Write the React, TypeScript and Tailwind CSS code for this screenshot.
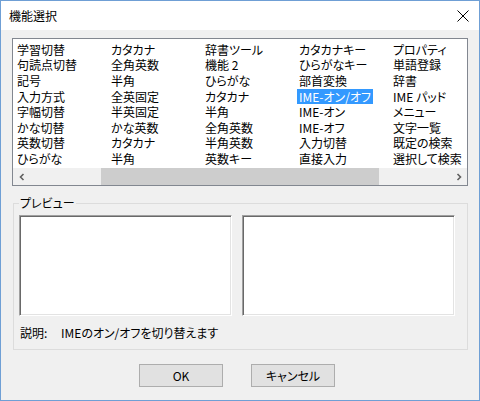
import React from "react";

const cols: string[][] = [
  ["学習切替", "句読点切替", "記号", "入力方式", "字幅切替", "かな切替", "英数切替", "ひらがな"],
  ["カタカナ", "全角英数", "半角", "全英固定", "半英固定", "かな英数", "カタカナ", "半角"],
  ["辞書ツール", "機能 2", "ひらがな", "カタカナ", "半角", "全角英数", "半角英数", "英数キー"],
  ["カタカナキー", "ひらがなキー", "部首変換", "IME-オン/オフ", "IME-オン", "IME-オフ", "入力切替", "直接入力"],
  ["プロパティ", "単語登録", "辞書", "IME パッド", "メニュー", "文字一覧", "既定の検索", "選択して検索"],
];

export default function App() {
  return (
    <div className="w-[480px] h-[401px] border border-[#6f9fd5] bg-[#f0f0f0] flex flex-col text-[12px] text-black overflow-hidden font-['Noto_Sans_CJK_JP','Noto_Sans',sans-serif] [font-feature-settings:'palt']">
      {/* Title bar */}
      <div className="h-[29px] bg-white flex items-center justify-between pl-[8px] pr-[7px] shrink-0">
        <span className="text-[12px] leading-none">機能選択</span>
        <svg width="12" height="12" viewBox="0 0 12 12" className="mr-[3px]">
          <path d="M0.5 0.5 L11.5 11.5 M11.5 0.5 L0.5 11.5" stroke="#000" strokeWidth="1" />
        </svg>
      </div>

      {/* Body */}
      <div className="flex flex-col pl-[11px] pt-[8px]">
        {/* List box */}
        <div className="w-[456px] h-[148px] border border-[#828790] bg-white flex flex-col">
          <div className="flex-1 flex pl-[2px] pt-[3px] overflow-hidden">
            {cols.map((col, ci) => (
              <div key={ci} className="w-[94px] shrink-0 flex flex-col">
                {col.map((t, ri) => {
                  const sel = ci === 3 && ri === 3;
                  return (
                    <div key={ri} className="h-[15.6px] flex items-center">
                      <span
                        className={
                          sel
                            ? "px-[2px] h-[15px] flex items-center bg-[#3399ff] text-white leading-none"
                            : "px-[2px] leading-none"
                        }
                      >
                        {t}
                      </span>
                    </div>
                  );
                })}
              </div>
            ))}
          </div>
          {/* Horizontal scrollbar */}
          <div className="h-[17px] bg-[#f0f0f0] flex items-center shrink-0">
            <div className="w-[17px] h-[17px] flex items-center justify-center">
              <svg width="8" height="8" viewBox="0 0 8 8">
                <path d="M5.5 1 L2.5 4 L5.5 7" stroke="#606060" strokeWidth="1.6" fill="none" />
              </svg>
            </div>
            <div className="flex-1 h-[17px] flex items-center">
              <div className="ml-[71px] w-[278px] h-[17px] bg-[#cdcdcd]" />
            </div>
            <div className="w-[17px] h-[17px] flex items-center justify-center">
              <svg width="8" height="8" viewBox="0 0 8 8">
                <path d="M2.5 1 L5.5 4 L2.5 7" stroke="#606060" strokeWidth="1.6" fill="none" />
              </svg>
            </div>
          </div>
        </div>

        {/* Preview group */}
        <div className="relative mt-[17px] ml-[1px] w-[455px] h-[147px] border border-[#dcdcdc] flex flex-col">
          <span className="absolute left-[5px] top-[-8px] px-[1px] bg-[#f0f0f0] leading-[14px]">プレビュー</span>
          <div className="flex gap-[10px] pl-[5px] pt-[11px]">
            <div className="w-[213px] h-[101px] bg-white border border-t-[#a0a0a0] border-l-[#a0a0a0] border-r-white border-b-white shadow-[inset_1px_1px_0_#696969,inset_-1px_-1px_0_#e3e3e3]" />
            <div className="w-[213px] h-[101px] bg-white border border-t-[#a0a0a0] border-l-[#a0a0a0] border-r-white border-b-white shadow-[inset_1px_1px_0_#696969,inset_-1px_-1px_0_#e3e3e3]" />
          </div>
          <div className="flex items-center mt-[11px] pl-[6px] leading-none">
            <span className="w-[41px]">説明:</span>
            <span>IMEのオン/オフを切り替えます</span>
          </div>
        </div>

        {/* Buttons */}
        <div className="flex mt-[14px] pl-[127px] gap-[28px]">
          <button className="w-[84px] h-[23px] bg-[#e1e1e1] border border-[#adadad] text-[12px] leading-none flex items-center justify-center">
            OK
          </button>
          <button className="w-[84px] h-[23px] bg-[#e1e1e1] border border-[#adadad] text-[12px] leading-none flex items-center justify-center">
            キャンセル
          </button>
        </div>
      </div>
    </div>
  );
}
